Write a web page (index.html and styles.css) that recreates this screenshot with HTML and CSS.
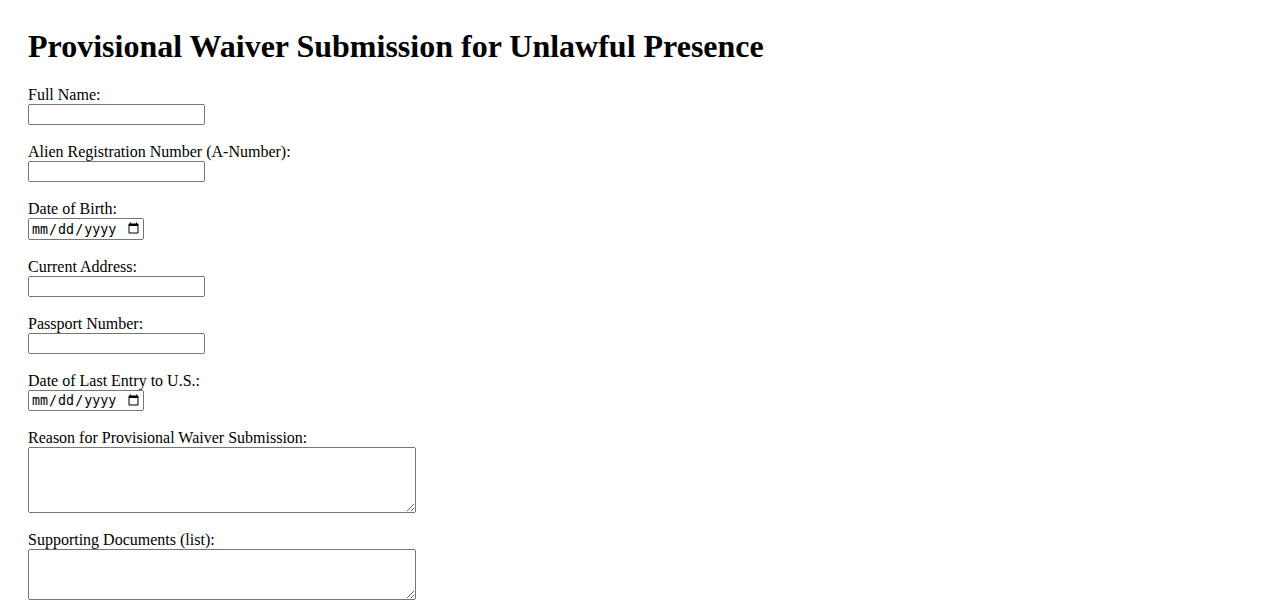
FILE: index.html
```html
<!DOCTYPE html>
<html>
<head>
    <title>Provisional Waiver Submission</title>
    <link rel="stylesheet" href="styles.css">
</head>
<body>
    <h1>Provisional Waiver Submission for Unlawful Presence</h1>
    <form id="waiverForm">
        <label for="fullName">Full Name:</label><br>
        <input type="text" id="fullName" name="fullName"><br><br>

        <label for="aNumber">Alien Registration Number (A-Number):</label><br>
        <input type="text" id="aNumber" name="aNumber"><br><br>

        <label for="dob">Date of Birth:</label><br>
        <input type="date" id="dob" name="dob"><br><br>

        <label for="address">Current Address:</label><br>
        <input type="text" id="address" name="address"><br><br>

        <label for="passport">Passport Number:</label><br>
        <input type="text" id="passport" name="passport"><br><br>

        <label for="lastEntry">Date of Last Entry to U.S.:</label><br>
        <input type="date" id="lastEntry" name="lastEntry"><br><br>

        <label for="reason">Reason for Provisional Waiver Submission:</label><br>
        <textarea id="reason" name="reason" rows="4" cols="50"></textarea><br><br>

        <label for="documents">Supporting Documents (list):</label><br>
        <textarea id="documents" name="documents" rows="3" cols="50"></textarea><br><br>

        <input type="submit" value="Submit">
    </form>
</body>
</html>
```

FILE: styles.css
```css
body {
    font-family: "Liberation Serif", "Times New Roman", serif;
    margin: 0;
    padding: 28px;
}

h1 {
    margin-top: 0;
}

input[type="text"] {
    box-sizing: border-box;
    width: 177px;
}

input[type="date"] {
    box-sizing: border-box;
    width: 116px;
}

textarea {
    box-sizing: border-box;
    width: 388px;
    vertical-align: top;
}
```
